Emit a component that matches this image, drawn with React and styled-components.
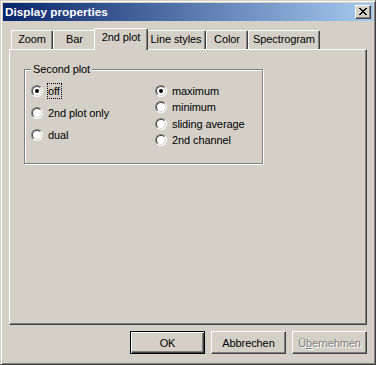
import React from "react";
import styled, { createGlobalStyle } from "styled-components";

const face = "#D4D0C8";

const GlobalStyle = createGlobalStyle`
  html, body {
    margin: 0;
    padding: 0;
    background: ${face};
  }
  body {
    font-family: "Liberation Sans", Arial, sans-serif;
    font-size: 11px;
    letter-spacing: -0.1px;
  }
`;

const Window = styled.div`
  width: 376px;
  height: 365px;
  box-sizing: border-box;
  border: 1px solid;
  border-color: ${face} #404040 #404040 ${face};
  box-shadow: inset 1px 1px #fff, inset -1px -1px #808080;
  padding: 2px;
  background: ${face};
  display: flex;
  flex-direction: column;
`;

const TitleBar = styled.div`
  height: 18px;
  flex: none;
  display: flex;
  align-items: center;
  justify-content: space-between;
  padding: 0 2px;
  background: linear-gradient(to right, #0a246a, #a6caf0);
`;

const TitleText = styled.span`
  color: #fff;
  font-weight: bold;
  font-size: 11.8px;
  letter-spacing: 0;
  line-height: 14px;
`;

const CloseButton = styled.div`
  width: 16px;
  height: 14px;
  box-sizing: border-box;
  border: 1px solid;
  border-color: #fff #404040 #404040 #fff;
  box-shadow: inset -1px -1px #808080;
  background: ${face};
  display: flex;
  align-items: center;
  justify-content: center;
  padding: 0 1px 1px 0;
`;

const Body = styled.div`
  flex: 1;
  display: flex;
  flex-direction: column;
  padding: 7px 6px 8px;
`;

const TabStrip = styled.div`
  height: 21px;
  flex: none;
  display: flex;
  align-items: flex-end;
  padding-left: 2px;
`;

const Tab = styled.div`
  box-sizing: border-box;
  width: ${(p) => (p.$active ? p.$w + 4 : p.$w)}px;
  height: ${(p) => (p.$active ? 22 : 19)}px;
  margin: ${(p) => (p.$active ? "0 -2px -1px" : "0")};
  position: relative;
  z-index: ${(p) => (p.$active ? 1 : 0)};
  background: ${face};
  border-top: 1px solid #fff;
  border-left: 1px solid #fff;
  border-right: 1px solid #404040;
  border-radius: 2px 2px 0 0;
  box-shadow: inset -1px 0 #808080;
  padding-top: 2px;
  text-align: center;
  line-height: 13px;
  white-space: nowrap;
`;

const Panel = styled.div`
  flex: 1;
  box-sizing: border-box;
  border-top: 1px solid #fff;
  border-left: 1px solid #fff;
  border-right: 1px solid #404040;
  border-bottom: 1px solid #404040;
  box-shadow: inset -1px -1px #808080;
  padding: 13px 14px;
`;

const Group = styled.fieldset`
  margin: 0;
  width: 239px;
  box-sizing: border-box;
  min-width: 0;
  border: 1px solid #808080;
  box-shadow: inset 1px 1px #fff, 1px 1px #fff;
  padding: 7px 6px 15px;
`;

const Legend = styled.legend`
  padding: 0 2px;
  background: ${face};
  line-height: 13px;
`;

const Columns = styled.div`
  display: grid;
  grid-template-columns: 124px 1fr;
  align-items: start;
`;

const Column = styled.div`
  display: flex;
  flex-direction: column;
  gap: ${(p) => p.$gap}px;
  padding-top: ${(p) => p.$offset || 0}px;
`;

const Option = styled.div`
  display: flex;
  align-items: center;
  height: 16px;
`;

const RadioCircle = styled.span`
  flex: none;
  width: 12px;
  height: 12px;
  box-sizing: border-box;
  border-radius: 50%;
  border: 1px solid;
  border-color: #808080 #fff #fff #808080;
  background: #fff;
  margin-right: 4px;
  position: relative;

  &::before {
    content: "";
    position: absolute;
    inset: 0;
    border-radius: 50%;
    border: 1px solid;
    border-color: #404040 ${face} ${face} #404040;
  }

  &::after {
    content: "";
    display: ${(p) => (p.$checked ? "block" : "none")};
    position: absolute;
    left: 3px;
    top: 3px;
    width: 4px;
    height: 4px;
    border-radius: 50%;
    background: #000;
  }
`;

const OptionLabel = styled.span`
  border: 1px dotted ${(p) => (p.$focused ? "#000" : "transparent")};
  padding: 0 1px 0 0;
  line-height: 14px;
  white-space: nowrap;
`;

const ButtonRow = styled.div`
  flex: none;
  display: flex;
  justify-content: flex-end;
  gap: 6px;
  margin-top: 6px;
`;

const Button = styled.button`
  width: 75px;
  height: 23px;
  box-sizing: border-box;
  padding: 0;
  background: ${face};
  font-family: "Liberation Sans", Arial, sans-serif;
  font-size: 11px;
  letter-spacing: -0.1px;
  color: ${(p) => (p.disabled ? "#808080" : "#000")};
  text-shadow: ${(p) => (p.disabled ? "1px 1px #fff" : "none")};
  border: 1px solid;
  border-color: ${(p) => (p.$default ? "#000" : "#fff #404040 #404040 #fff")};
  box-shadow: ${(p) =>
    p.$default
      ? "inset 1px 1px #fff, inset -1px -1px #404040, inset -2px -2px #808080"
      : "inset -1px -1px #808080"};
  border-radius: 0;
`;

const tabs = [
  { label: "Zoom", w: 42 },
  { label: "Bar", w: 43 },
  { label: "2nd plot", w: 50, active: true },
  { label: "Line styles", w: 60 },
  { label: "Color", w: 42 },
  { label: "Spectrogram", w: 72 },
];

const Radio = ({ label, checked, focused }) => (
  <Option>
    <RadioCircle $checked={checked} />
    <OptionLabel $focused={focused}>{label}</OptionLabel>
  </Option>
);

const CloseIcon = () => (
  <svg width="8" height="7" viewBox="0 0 8 7" shapeRendering="crispEdges">
    <path
      fill="#000"
      d="M0 0h2v1H0zM6 0h2v1H6zM1 1h2v1H1zM5 1h2v1H5zM2 2h4v1H2zM3 3h2v1H3zM2 4h4v1H2zM1 5h2v1H1zM5 5h2v1H5zM0 6h2v1H0zM6 6h2v1H6z"
    />
  </svg>
);

export default function App() {
  return (
    <>
      <GlobalStyle />
      <Window>
        <TitleBar>
          <TitleText>Display properties</TitleText>
          <CloseButton>
            <CloseIcon />
          </CloseButton>
        </TitleBar>
        <Body>
          <TabStrip>
            {tabs.map((t) => (
              <Tab key={t.label} $w={t.w} $active={t.active}>
                {t.label}
              </Tab>
            ))}
          </TabStrip>
          <Panel>
            <Group>
              <Legend>Second plot</Legend>
              <Columns>
                <Column $gap={6}>
                  <Radio label="off" checked focused />
                  <Radio label="2nd plot only" />
                  <Radio label="dual" />
                </Column>
                <Column $gap={0.3}>
                  <Radio label="maximum" checked />
                  <Radio label="minimum" />
                  <Radio label="sliding average" />
                  <Radio label="2nd channel" />
                </Column>
              </Columns>
            </Group>
          </Panel>
          <ButtonRow>
            <Button $default>OK</Button>
            <Button>Abbrechen</Button>
            <Button disabled>
              Ü<u>b</u>ernehmen
            </Button>
          </ButtonRow>
        </Body>
      </Window>
    </>
  );
}
